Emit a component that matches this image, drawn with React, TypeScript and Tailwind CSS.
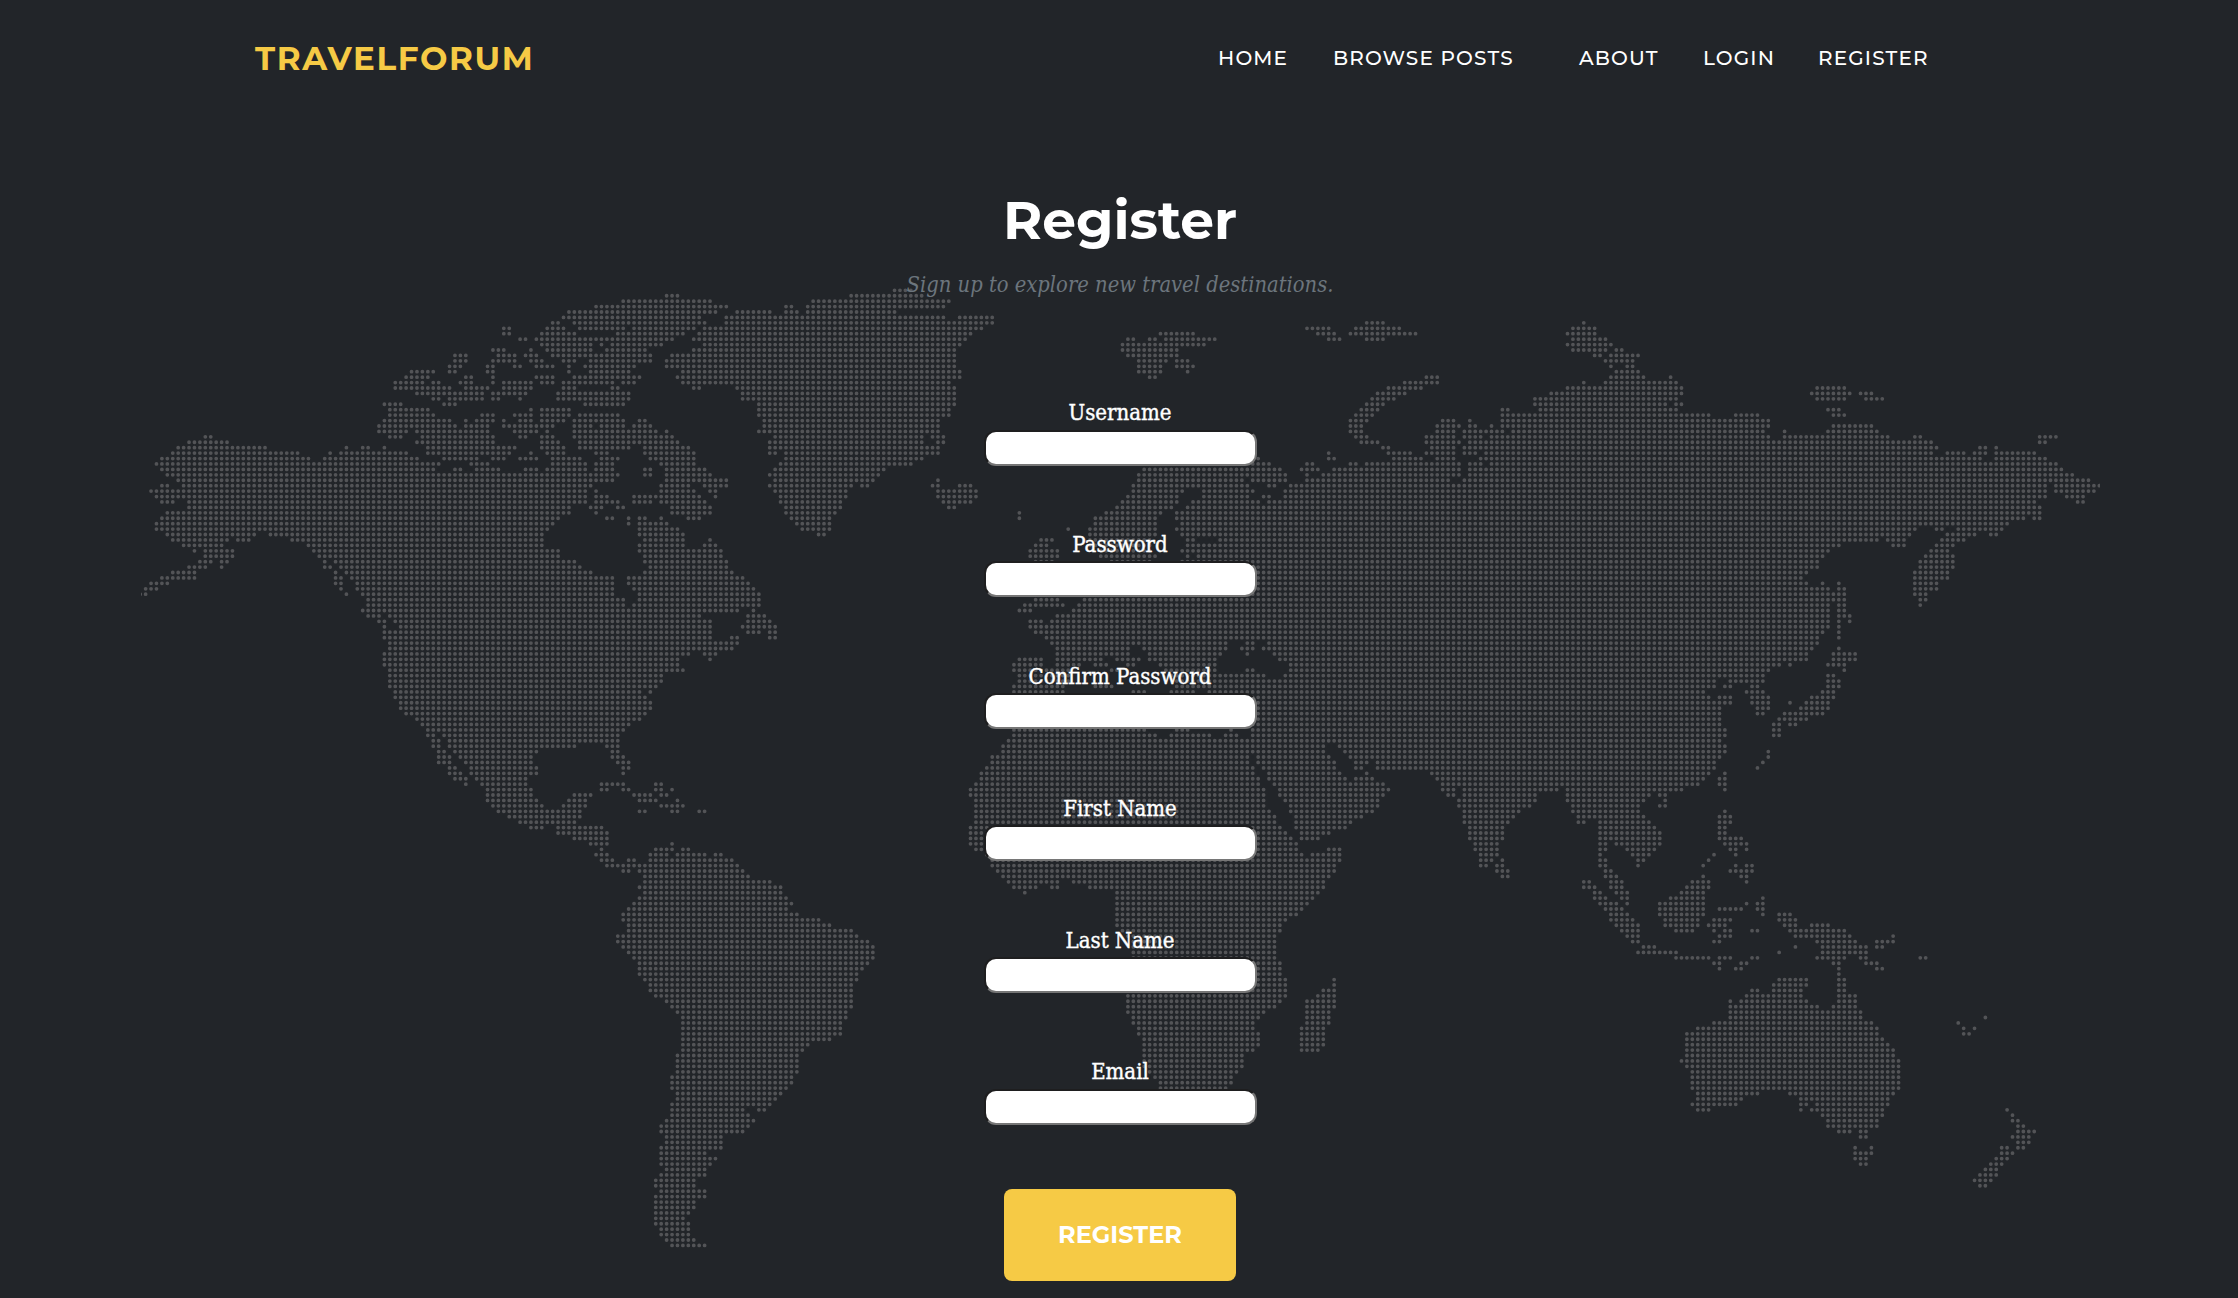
import React from "react";

/* Dotted world map: every line of a region is one row of dots, listed as runs "from-to".
   An open run ("12-") reaches the region's right edge; "." is an empty row. */
type Region = { x: number; scale: number; width: number; row: number; lines: string };

const PITCH = 5.427;
const MAP_X = 140.2;
const MAP_Y = 290.3;

const REGIONS: Region[] = [
  {
    x: 130, scale: 3, width: 1380, row: 4,
    lines: `1316-
1300-
1268-1284 1333-
1121-1137 1252-1300 1349-
1121-1137 1235-1333
1170-1186 1219-
1235-
1088-1121 1203 1252-
974-1007 1105-1154 1186-1219 1268-
974-1007 1088-1154 1203-1235 1300-1333
958-990 1072-1088 1154-1170 1219-1268 1316
844-909 958-974 1072-1088 1316
828-893 1007-1023 1088 1219-1268 1333-
795-860 877 909-925 990-1023 1088 1121-1203 1235-1268 1300-
795-958 1007-1072 1121-1203 1300-1333
860-893 909-1056 1088-1105 1121-1186 1284-
909-925 958-1056 1088-1105 1170 1284-
762-811 942-974 1365-
779-893 1203 1235-1316
779-909 1056-1088 1154-1203 1235-1316
762-958 1007 1040-1088 1121 1170-1203 1235-1300
746-974 1007-1072 1121-1219 1235-1268
746-828 860-1072 1154-1219 1252
779-811 877-1088 1170-1186 1235-1268
860-1088 1235-1284
893-1154 648 697-713 762 1235-1300
127-502 599 632-828 893-1137 1203 1252-1300
95-534 583-860 942-1007 1023-1040 1088-1121 1170-1219 1268-1300
79-925 1023-1072 1268-1300
95-909 974-990 1040-1105 1186-1219 1252-1300
112-1300
144-1300
95-112 160-1300
63-1300
79-1300
95-127 176-1300
176-1316
112-1316
95-1284
79-1268
79-1252
112-371 420-1235
127-287 322-355 485-1235
160-274 534-1235
192 225-306 550-1284
225-306 567-1284
209-241 274-290 583 615-1333
176-225 274 583-599 632-1349
127-192 615 648-
95-192 615-632 664-
63-112 615-632 681-
47-79 632 681-
30-47 648 697-
713-
713-
697-
713-746 779-
746-762 795-
762 811-
762-
762-
779-
779-
762-
762-
762-
779-
779-
779-
779-`,
  },
  {
    x: 130, scale: 3, width: 1380, row: 27,
    lines: `225-241
176-290
144-404`,
  },
  {
    x: 560, scale: 3, width: 1380, row: 0,
    lines: `1004-1050
320-352 873-1085
190-450 759-1166
108-500 678-694 743-1150
27-466 532-630 678-711 743-1004
10-417 499-1150 1199-1297
43-434 499-1297
10 59-190 222-401 434-1265
10-43 173-368 417-1232
10-336 401-417 434-1215
10-92 125 157-303 434-1199
10-92 141-255 401-1183
10-271 336-1183
10-43 92-271 320-1183
27 76-222 320-1183
27 92-206 369-1199
43-238 352-1199
10-157 190-222 369-1166
10-43 157-173 401-417 532-1183
10-206 548-1183
10-206 548-1183
76-190 597-1183
10-27 597-1166
10-27 59-173 597-1166
10 43-190 238-255 613-1134
43-92 125-190 222-271 613-1134
43-287 320 597-1134
43-336 646-1085 1117-1150
59-352 630-1085 1134-1150
10 59-206 255-385 630-1134
108-141 255-401 630-646 678-1134
10-27 43-59 125-173 271-401 678-1085
10-76 108-157 303-401 662-1052
10-76 108-157 255-271 320-434 646-971
10-173 255-271 320-450 630-955
10-157 320-499 646-939 1134
10-92 303-385 434-499 630-873 906-922 1117-1134 1199-1232
10-76 108 303-401 450-466 646-857 1134-1248
10-76 108-141 222-417 466 662-857 1134-1248
10-76 108-173 222-271 303-434 662-841 1150-1232
10-27 92-125 173-190 336-450 678-841 1166-1183
10-27 108 336-450 678-825
141-157 206 238-255 303 385-417 694-808
206 238-320 711-808
238-352 727-808
238-368 776-792
255-368 450
238-368 434-466
238-482
255-482
10-43 255-499
10-59 271-499
10-92 255-515
10-157 206-548
10-157 206-564
10-157 222-580
10-157 238-597
10-190 238-597
10-190 222-597
10-532 580
10-417 564-613
10-450 564-630
10-450 548-646
10-450 564-597 630-646
10-450 515-532 630-646
10-532
10-515
10-385 434-466
10-352 450
10-352
10-368
10-303
10-303
10-287`,
  },
  {
    x: 360, scale: 2.9037, width: 1568, row: 69,
    lines: `70-925
86-940
86-877
86-877
86-861
102-814 845
102-830
118-845
118-845
133-830
165-814
181-782
196-767
196-212 244-751
212-228 260-751
212-228 260-625 719-751
228-244 275-515 735-751
228-260 291-499 735-767
228-260 307-499 751-782
260-275 322-515 767-782
260-291 322-515 767
275-307 338-484
307 354-484 703-767 861-877
370-499 703-719 767-782 861-877 908
370-499 625-672 798-845 877-892
370-515 609-656 814-861 924
385-531 593-656 877-940
401-641 814-830 908-924 987-1003
433-641
464-625
496-531 578-703
578-719
625-719
672-719 908
703 861-908 940-955
688-719 845-892 924-1003 1034-1050
703-735 782-798 845-1081
719-1097
767-782 814-1113
830-1128
830-1191
814-1223
830-1223
814-1239
798-1254
782-1239
767-1270
767-1333
782-1365
782-1428
751-1444
751-1475
767-1491
782-1491
798-1491
814-1475
814-1459
814-1444
830-1444
845-1428
845-1428
861-1428
892-1428
908-1428
924-1412
940-1412
940-1396
940-1396
940-1396
940-1365
940-1302
940-1286
924-1270
924-1270
924-1270
924-1270
908-1254
908-1254
908-1239
924-1223
924-1207
908-1191
908-1113 1160-1176
908-1128
892-1144
877-1128
877-1113
892-1050
892-1050
877-1050
877-1003
877-1034
877-1018
892-1003
877-1003
861-971
861-971
877-1003
861-1003
861-971
861-971
861-955
861-940
861-955
877-955
877-955
892-971
908-1003`,
  },
  {
    x: 960, scale: 3, width: 965, row: 8,
    lines: `601-699
503-519 568-584 617-764
487-732
487-650
503-650
536-617 650-683
536-601 650-699
536-601 683
568-584`,
  },
  {
    x: 960, scale: 3, width: 992, row: 31,
    lines: `895
880-928
552-960
536-975
536-845 877-975
519-861 926-942
519-666 731-861 877 975-
503-650 731-861 910-926 975-
487-650 699-893 926-
471-634 683-
178 438-601 650-
178 406-585 650-
406-585 666-
324 390-585 650-
390-585 666-
243-276 390-569 683-699 780-
227-260 390-569 683-
211-292 422-569 666-699 715-
211-292 422 438-585 683 715-
227-276 455-569 666-
880-
880-
880-
880-
880-
880-
227-292 373-
194-308 357-
178-211 341-
292-
211-243 276-
211-
227-
260-
276-796 861-877 926-
292-503 552-796 845-877 910-
292-503 568-780 861 942-
178-243 292-422 471-536 568-764 958-975
162-243 292-357 406-438 503-520 601-764 990
162-330 450-470 620-764 861-877 990
178-330 640-910 975-
178-330 650-
162-308 406-454 650-
162-308 520-552 634-699 748-
880-
880-
880-
880-
880-
880-`,
  },
  {
    x: 960, scale: 3, width: 1320, row: 76,
    lines: `892-
892-
892-
892-
892-
162-552 650-683 812 877-
162-585 634-748 796-828 877-
146-
129-1088 1137-
129-1088 1154-
97-861 893-1105 1170-
97-861 893-1121 1186-1219 1252-
81-877 910-1121 1186-1203 1252-
64-877 926-1137 1219
64-893 926-1154 1186-1235
48-893 942-1268
31-910 958-1284
31-910 958-1268
48-910 975-1252
48-910 991-1252
48-926 991-1235
48-942 1007-1203
48-942 1007-1170
31-958 1007-1154
31-975 1023-1105
31-991 1023-1072
31-1007
48-1007 1105-1137
81-1023 1056-1137
97-1137
97-1121
113-1121
129-1105
146-292 341-1088
162-227 276-292 390-1088
194 471-1072
471-1056
471-1040
471-1023
471-1007
471-975
471-958
487-958
503-942
519-942
519-942
519-942
519-942
519-958
519-958
519-958
503-975 1121
503-975 1121
503-975 1088-1121
503-975 1072-1121
503-958 1040-1121
503-942 1040-1121
503-910 1040-1105
519-893 1040-1105
519-877 1040-1105
536-877 1023-1088
536-893 1023-1088
552-893 1023-1088
552-893 1023-1088
552-877 1023-1072
552-845
552-845
552-845
568-828
585-812
601-812
601-796`,
  },
  {
    x: 996, scale: 2.6849, width: 1568, row: 77,
    lines: `1085-
1085-
1085-
1085-
1085-
1085-
1085-
1085-
1085-
1085-
1085-
1085-
1170-
1184-
1199-
1199-1228 1257-1510 1531-
1213-1228 1257-1446 1531-
1242-1446 1531-
1242-1430 1546-
1257-1402 1546-
1257-1388 1560
1257-1373 1560
1271-1359
1271-1359
1271-1359
1286-1344
1286-1344
1300-1344
1300-1329 1359
1300-1315 1344-1359
1344-1373
1359-1373`,
  },
  {
    x: 1280, scale: 3, width: 1260, row: 6,
    lines: `260-309 910
81-146 227-357 877-942
113-162 211-406 861-942
146-178 260-309 877-975
861-991
877-975 1007-1023
942-958 991-1072
975-1056
991 1040-1056
1007-1072
438-471 991-1088 1170
373-471 910 975-1186
325-422 861-1203
292-373 812-1203
276-341 763-1186
260-309 763-1154 1186-1203
243-292 666-683 780-1137 1154-1186
227-276 666-
211-260 487-520 568 666-
211-243 471-536 568-585 634 666-
211-243 471-520 552-666 699-
227-260 438-520 552-601 634-
243-292 438-536 568-
308-325 455-520 552-
146 325-390 438-520 552-585 617-
146-162 341-422 471-520 601-
81-97 211-227 260-536 568-601 634-
64-113 162-536 568-
15 81 129-536 568-
15 81-503 552-
31-
15-
15-
15-
15-
15-
15-
15-
15-
15-
15-
15-
15-
15-
15-
15-
15-
15-
15-
15-
15-
15-
15-
15-
15-
15-
15-
15-
15-
15-
15-
15-
15-
31-
31-
15-
15-
15-
15-
15-
15-`,
  },
  {
    x: 1680, scale: 3, width: 1320, row: 18,
    lines: `4 410-492
4 394-508 540-573
410-492 557-606
4
443-476
4-85 166-231 459-492
4-264
4-264 459-573
4-248 313 443-589
4-264 313-622 703-720 1078-1127
4-752 1078-1094
4-768 899-915 948
4-752 801-850 882-915 948-1062
4-899 948-1094
4-1127
4-1143
4-1176
4-1225
4-1094 1127-1257
4-1094 1127-1241
4-1094 1160-1208
4-1062 1192-1208
4-1078
4-1078
4-1029 1062-1078
4-980
4-703 768-785 834-964
4-687 801-882 931-948
4-589 622-671 785-850
4-476 638-671 768-817
4-443 752-801
4-427 736-817
4-410 720-817
4-410 720-817
4-378 703-801
4-362 703-801
4-378 427 476 703-768
4-443 476-492 703-768
4-492 703-736
4-459 476-492 720-736
4-443 476-492 720
4-443 476-492
4-443 476-508
4-443 476 508
4-443 476
4-427 476
4-410 476
4-410
4-394 476
4-378 459-524
4-378 459-524
4-297 329 443-492
4-264 492
4-248 443-459
4-101 150-248 443-476
4-101 134-150 215-231 443-476
4-69 199-248 427-459
4-85 118-150 215-264 394-459
4-150 215-264 329 378-443
4-118 231-264 362-443
4-118 231-248 313-427
4-118 297-378`,
  },
  {
    x: 1560, scale: 3, width: 1500, row: 76,
    lines: `5-510 575-624 689 738-803
5-477 591-624 722-803
5-477 591-608 673-787
5-477 656-738
5-477 640-656 689-705
5-494 640-656
5-494 640-656
5-477
5-494
5-494 624
5-477 624
5-461 608
5-461 591
5-445 494
5-429 477-494
5-412 477-494
21-363 494
21-266 298-315
21-250 315
38-233 298-315
54-233 494
54-250 477-510
54-70 119-266 477-510
119-282 477-494
119-298 477-494
119-298 477-543
119-135 168-298 494-559
119-135 201-282 510-526 559
119 217-266 461 526
119-135 233-250 445
119-135 233 429 526 559-575
135-152 510-575
135-168 429 543-559
70-86 152-184 396-445 559
70-103 152-184 380-445
103-119 168-201 363-429
103-135 184-201 331-429 608
119-168 201 298-429 559 591-608
135-184 298-429 477-543 591-608
152-201 298-429 608 656-689
152-217 315-412 461-510 656-705
168-233 315-412 445-494 673-705 754-803
184-233 347-396 461 494-510 575-591 689-852
201-233 477-510 705-868 998
217-233 461-477 771-884 950-998
250-282 705 787-917 950-966
233-347 656 787-917
347-445 477-510 575-591 771-852 901-917 1080-1096
461-477 543-559 819-835 917-950
477 526-543 835 950-966
835
656-738 835-852
640-738 835-852
575-591 640-722 835-852
559-722 835-884
510 543-738 835-884
510-771 819-884
510-901
510-901 1275
461-933 1194
412-950 1210 1242
380-950 1210-1226
380-966
380-982
380-998
380-998
363-1015
380-1015
396-1015
396-1015
396-1015
396-1015
412-591 689-998
412-543 722-982
396-526 722-738 771-982
412-445 722 754-966 1340
787-966 1356
803-950 1356-1372
803-950 1372-1389
835-868 901-917 1372-1421
901-917 1356-1405
1372-1405
884 933 1324-1340 1372-1389
884-933 1324-1356
884-917 1307-1340
901-917 1291-1324
1275-1307
1259-1307
1242-1291
1259-1275`,
  },
];

function buildMapPath(): string {
  const cells = new Set<number>();
  for (const region of REGIONS) {
    const column = (v: number) => Math.round((region.x + v / region.scale - MAP_X) / PITCH);
    region.lines.split("\n").forEach((line, i) => {
      if (line === ".") return;
      for (const run of line.trim().split(" ")) {
        const [from, to] = run.split("-");
        const start = column(Number(from));
        const end = to === undefined ? start : column(to === "" ? region.width - 6 : Number(to));
        for (let c = start; c <= end; c++) cells.add((region.row + i) * 1000 + c);
      }
    });
  }
  let d = "";
  cells.forEach((cell) => {
    const x = MAP_X + (cell % 1000) * PITCH;
    const y = MAP_Y + Math.floor(cell / 1000) * PITCH;
    d += `M${x.toFixed(2)} ${y.toFixed(2)}h0`;
  });
  return d;
}

const MAP_PATH = buildMapPath();

function WorldMap() {
  return (
    <svg className="pointer-events-none absolute left-[141px] top-0" width="1959" height="1298" viewBox="141 0 1959 1298" aria-hidden="true">
      <path d={MAP_PATH} fill="none" stroke="#535457" strokeWidth="3.8" strokeLinecap="round" />
    </svg>
  );
}

const NAV = [
  { label: "HOME", className: "w-[115px]" },
  { label: "BROWSE POSTS", className: "w-[246px]" },
  { label: "ABOUT", className: "w-[124px]" },
  { label: "LOGIN", className: "w-[115px]" },
  { label: "REGISTER", className: "w-[120px]" },
];

const FIELDS = [
  { label: "Username", type: "text" },
  { label: "Password", type: "password" },
  { label: "Confirm Password", type: "password" },
  { label: "First Name", type: "text" },
  { label: "Last Name", type: "text" },
  { label: "Email", type: "email" },
];

export default function App() {
  return (
    <div className="relative h-[1298px] w-[2238px] overflow-hidden bg-[#222529] font-['Montserrat','Inter',sans-serif] text-white">
      <WorldMap />
      <header className="relative flex h-[116px] items-center pl-[255px]">
        <a className="w-[963px] whitespace-nowrap pt-[2px] text-[32.5px] font-bold leading-none tracking-[1.65px] text-[#f6ca45]">TRAVELFORUM</a>
        <nav className="flex text-[20px] font-medium leading-none tracking-[1.15px]">
          {NAV.map((item) => (
            <a key={item.label} className={`whitespace-nowrap ${item.className}`}>
              {item.label}
            </a>
          ))}
        </nav>
      </header>
      <main className="relative flex flex-col items-center pl-[2px]">
        <h2 className="mt-[70px] h-[68px] whitespace-nowrap text-[53.5px] font-bold leading-[68px]">Register</h2>
        <h3 className="mt-[15px] h-[33px] whitespace-nowrap font-['Roboto_Slab','DejaVu_Serif_Condensed','DejaVu_Serif',serif] text-[21.75px] italic leading-[32px] text-[#6c757d]">
          Sign up to explore new travel destinations.
        </h3>
        <form className="mt-[96px] flex flex-col items-center font-['Roboto_Slab','DejaVu_Serif_Condensed','DejaVu_Serif',serif]">
          {FIELDS.map((field) => (
            <label key={field.label} className="flex h-[131.9px] flex-col items-center text-[22px] leading-[30px]">
              <span className="h-[31.6px] whitespace-nowrap [-webkit-text-stroke:0.4px_white]">{field.label}</span>
              <input
                type={field.type}
                className="h-[36px] w-[273px] rounded-[12px] border-2 border-t-[#1e1e1f] border-r-[#767676] border-b-[#767676] border-l-[#1e1e1f] bg-white"
              />
            </label>
          ))}
          <button
            type="button"
            className="h-[92px] w-[232px] rounded-[8px] bg-[#f6ca45] font-['Montserrat','Inter',sans-serif] text-[24px] font-bold text-white"
          >
            REGISTER
          </button>
        </form>
      </main>
    </div>
  );
}
